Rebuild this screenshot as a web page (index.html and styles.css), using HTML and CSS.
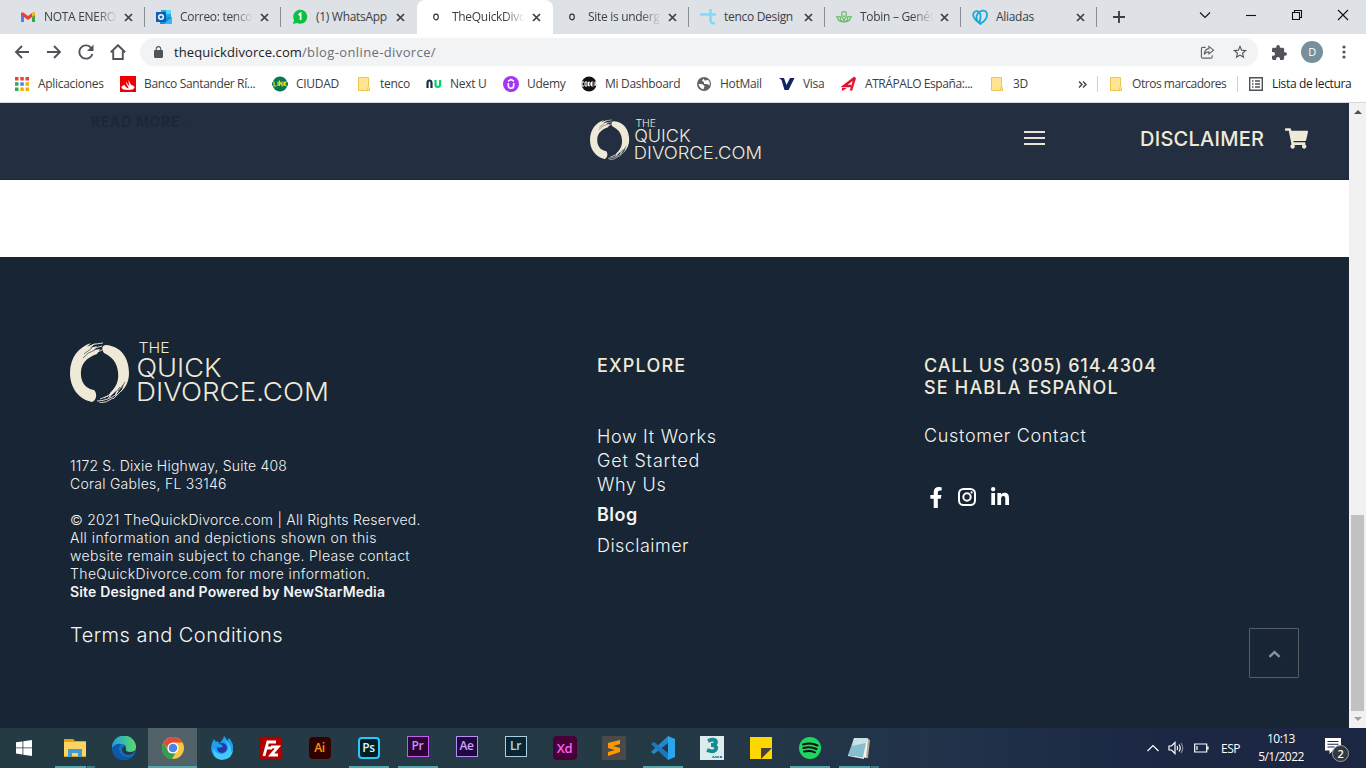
FILE: index.html
```
<!DOCTYPE html>
<html lang="es">
<head>
<meta charset="utf-8">
<title>TheQuickDivorce</title>
<link rel="stylesheet" href="styles.css">
</head>
<body>
<svg class="defs" aria-hidden="true">
  <symbol id="close" viewBox="0 0 9 9"><path d="M1 1l7 7M8 1L1 8" stroke="#3c4043" stroke-width="1.7" fill="none"/></symbol>
  <symbol id="folder" viewBox="0 0 16 16"><path d="M2.500 1.500h10v9l1 1v3h-11z" fill="#ffe591" stroke="#e9c84d"/><path d="M11.500 14.500v-3l1-1 1 1v3z" fill="#ffe591" stroke="#e9c84d" stroke-width=".8"/></symbol>
  <g id="ring">
    <g fill="#efead8">
      <path d="M22 60C8 57 0 45 0 31 0 15 9 5 21 1l-4 4 9-4-6 5 7-2-3 4 6-1-3 5C16 16 10 22 11 34c1 8 6 13 13 14 4 4 2 11-2 12z"/>
      <path d="M36 3c15 1 23 13 23 28 0 8-3 14-8 19l3-8-9 12 1-5-8 8 2-6c7-7 9-13 8-21-1-10-6-15-14-19-3-4-2-8 2-8z"/>
    </g>
    <path d="M16 6Q24 1 33 1M20 9q6-4 12-5M25 11l7-3M10 13Q16 5 23 3M27 59q10 0 20-7M29 61q8 0 14-5M34 56q8-4 12-9M43 57l9-9M46 46l7-8M30 57l8-3" fill="none" stroke="#efead8" stroke-width=".9"/>
    <path d="M14 12l8-6M13 16q5-6 12-8M50 45q-4 6-9 9M55 40q-3 5-7 9" fill="none" stroke="#172535" stroke-width=".6"/>
  </g>
</svg>

<div class="tabs">
  <div class="tab first"><svg class="ico" viewBox="0 0 16 16"><path d="M1 13V4l3 2v7z" fill="#4285f4"/><path d="M12 6l3-2v9h-3z" fill="#34a853"/><path d="M1 5q0-3 3-1l4 3 4-3q3-2 3 1v1L8 11 1 6z" fill="#ea4335"/><path d="M12 4q3-2 3 1v1l-3 2z" fill="#fbbc04"/></svg><span>NOTA ENERO</span><svg class="x"><use href="#close"/></svg></div>
  <div class="tab"><svg class="ico" viewBox="0 0 16 16"><path d="M5 1h10v7H5z" fill="#28a8ea"/><path d="M10 1h5v4h-5z" fill="#50d9ff"/><path d="M4 7l12 1v7H4z" fill="#1490df"/><path d="M16 8l-8 7h8z" fill="#35b8f1"/><path d="M0 3h10v10H0z" fill="#0f5fb4"/><circle cx="5" cy="8" r="2.300" fill="none" stroke="#fff" stroke-width="1.500"/></svg><span>Correo: tenco</span><svg class="x"><use href="#close"/></svg></div>
  <div class="tab no-sep"><svg class="ico" viewBox="0 0 16 16"><path d="M1 15l1-4a7 7 0 1 1 3 3z" fill="#0bc143"/><path d="M6.500 6L8.600 4.500V11" stroke="#fff" stroke-width="1.700" fill="none"/></svg><span class="full">(1) WhatsApp</span><svg class="x"><use href="#close"/></svg></div>
  <div class="tab active"><svg class="ico" viewBox="0 0 16 16"><ellipse cx="8" cy="8" rx="2.300" ry="2.800" fill="none" stroke="#333" stroke-width="1.200"/></svg><span>TheQuickDivo</span><svg class="x"><use href="#close"/></svg></div>
  <div class="tab"><svg class="ico" viewBox="0 0 16 16"><ellipse cx="8" cy="8" rx="2.300" ry="2.800" fill="none" stroke="#333" stroke-width="1.200"/></svg><span>Site is underg</span><svg class="x"><use href="#close"/></svg></div>
  <div class="tab"><svg class="ico" viewBox="0 0 16 16"><path d="M0 5.500h16M10.500 0v12q0 2.500 4.500 2.300" stroke="#7fdcf8" stroke-width="2.600" fill="none"/></svg><span class="full">tenco Design</span><svg class="x"><use href="#close"/></svg></div>
  <div class="tab"><svg class="ico" viewBox="0 0 16 16"><g fill="none" stroke="#6dbb6d" stroke-width="1.100"><circle cx="8" cy="5" r="2.400"/><path d="M8 13Q4 12 4 7.500q4 1 4 5.500zM8 13q4-1 4-5.500-4 1-4 5.500zM8 13Q2 13 .7 7.500l3 .5M8 13q6 0 7.300-5.500l-3 .5"/></g></svg><span>Tobin – Genét</span><svg class="x"><use href="#close"/></svg></div>
  <div class="tab"><svg class="ico" viewBox="0 0 16 16"><g fill="none" stroke="#18a9dc" stroke-width="1.800"><path d="M8 14.500C2 11 0 6 2 3.500S8 2 8.500 6 7 12 8 14.500z"/><path d="M8 14.500c6-2 8-8 6.500-11S8 1 5.500 5s0 8 2.500 9.500z"/></g></svg><span class="full">Aliadas</span><svg class="x"><use href="#close"/></svg></div>
  <svg class="plus" viewBox="0 0 12 12"><path d="M6 0v12M0 6h12" stroke="#3c4043" stroke-width="1.900"/></svg>
  <div class="win">
    <svg viewBox="0 0 12 12"><path d="M1 3.500l5 5 5-5" /></svg>
    <svg viewBox="0 0 12 12"><path d="M1 6.500h10"/></svg>
    <svg viewBox="0 0 12 12"><path d="M1.500 3.500h7v7h-7zM3.500 3.500v-2h7v7h-2"/></svg>
    <svg viewBox="0 0 12 12"><path d="M1 1l10 10M11 1L1 11"/></svg>
  </div>
</div>

<div class="toolbar">
  <div class="nav">
    <svg viewBox="0 0 16 16"><path d="M15 8H2M8 2L2 8l6 6"/></svg>
    <svg viewBox="0 0 16 16"><path d="M1 8h13M8 2l6 6-6 6"/></svg>
    <svg class="fill" viewBox="3.500 3.500 17 17"><path d="M17.650 6.350A7.960 7.960 0 0 0 12 4c-4.420 0-7.990 3.580-7.990 8s3.570 8 7.990 8c3.730 0 6.840-2.550 7.730-6h-2.080A5.990 5.990 0 0 1 12 18c-3.310 0-6-2.690-6-6s2.690-6 6-6c1.660 0 3.140.69 4.220 1.780L13 11h7V4l-2.350 2.350z"/></svg>
    <svg viewBox="0 0 16 16"><path d="M.8 8.300L8 1.200l7.200 7.100M3.200 7v8h9.600V7"/></svg>
  </div>
  <div class="omnibox">
    <svg class="lock" viewBox="4 1 16 21"><path d="M18 8h-1V6c0-2.760-2.240-5-5-5S7 3.240 7 6v2H6c-1.100 0-2 .9-2 2v10c0 1.100.9 2 2 2h12c1.100 0 2-.9 2-2V10c0-1.100-.9-2-2-2zm-2.900 0H8.900V6c0-1.710 1.390-3.100 3.100-3.100s3.100 1.390 3.100 3.100v2z"/></svg>
    <div class="url"><span class="host">thequickdivorce.com</span><span class="path">/blog-online-divorce/</span></div>
    <svg class="share" viewBox="0 0 16 16"><path d="M6 2.500H3Q1.500 2.500 1.500 4v8.500Q1.500 14 3 14h8.500q1.500 0 1.500-1.500V11M9.500 1.500l5 4-5 4V7.300Q6 7.300 4.500 10 5 4.500 9.500 3.900z"/></svg>
    <svg class="star" viewBox="2 2 20 20"><path d="M22 9.240l-7.190-.62L12 2 9.190 8.630 2 9.240l5.460 4.730L5.820 21 12 17.270 18.180 21l-1.630-7.030L22 9.240zM12 15.400l-3.760 2.270 1-4.280-3.320-2.880 4.380-.38L12 6.100l1.710 4.040 4.380.38-3.320 2.880 1 4.280L12 15.400z"/></svg>
  </div>
  <svg class="ext" viewBox="2 1 21 21"><path d="M20.500 11H19V7c0-1.100-.9-2-2-2h-4V3.500a2.500 2.500 0 0 0-5 0V5H4c-1.100 0-1.990.9-1.990 2v3.800H3.500c1.490 0 2.700 1.210 2.700 2.700s-1.210 2.700-2.700 2.700H2V20c0 1.100.9 2 2 2h3.800v-1.500c0-1.490 1.210-2.700 2.700-2.700s2.700 1.210 2.700 2.700V22H17c1.100 0 2-.9 2-2v-4h1.500a2.500 2.500 0 0 0 0-5z"/></svg>
  <div class="avatar">D</div>
  <svg class="dots" viewBox="0 0 4 14"><circle cx="2" cy="2" r="1.600"/><circle cx="2" cy="7" r="1.600"/><circle cx="2" cy="12" r="1.600"/></svg>
</div>

<div class="bookmarks">
  <div class="bm b1"><svg viewBox="0 0 16 16"><path d="M1 1h3.500v3.500H1zM6.300 1h3.500v3.500H6.300zM11.500 1H15v3.500h-3.500z" fill="#ea4335"/><path d="M1 6.300h3.500v3.500H1zM1 11.500h3.500V15H1z" fill="#34a853"/><path d="M6.300 6.300h3.500v3.500H6.300z" fill="#4285f4"/><path d="M11.500 6.300H15v3.500h-3.500zM11.500 11.500H15V15h-3.500zM6.300 11.500h3.500V15H6.300z" fill="#f9ab00"/></svg>Aplicaciones</div>
  <div class="bm b2"><svg viewBox="0 0 16 16"><path d="M0 0h16v16H0z" fill="#ec0000"/><path d="M8 2q0 2 1.500 4T11 9q3.500.5 3.500 2.500Q14 14 8 14t-6.500-2.500Q1.500 9.500 5 9q0 2 3.500 3.500Q8.500 11 7 9T6 5.500Q6.500 7 8 8.500T9.500 12" fill="#fff"/></svg>Banco Santander Rí...</div>
  <div class="bm b3"><svg viewBox="0 0 16 16"><circle cx="8" cy="8" r="7.500" fill="#05765b"/><rect x="0" y="5.500" width="16" height="5" rx="2" fill="#05765b"/><path d="M2 5.500v4.500h2.500M6 5.500V10M7.500 10V5.500l2.500 4V5.500M12 5.500V10M14.500 5.500L12 8l2.500 2" stroke="#f5dd15" stroke-width="1.200" fill="none"/></svg>CIUDAD</div>
  <div class="bm b4"><svg><use href="#folder"/></svg>tenco</div>
  <div class="bm b5"><svg viewBox="0 0 16 16"><path d="M1.500 12V7q0-2.500 2-2.500t2 2.500v5" stroke="#1c2b45" stroke-width="2.200" fill="none"/><path d="M9.500 4v4.500q0 2.500 2.300 2.500t2.300-2.500V4" stroke="#00d26a" stroke-width="2.200" fill="none"/></svg>Next U</div>
  <div class="bm b6"><svg viewBox="0 0 16 16"><circle cx="8" cy="8" r="8" fill="#a435f0"/><path d="M5.300 7v2.500q0 2.700 2.700 2.700t2.700-2.700V7M5 5.200l3-1.700 3 1.700" stroke="#fff" stroke-width="1.600" fill="none"/></svg>Udemy</div>
  <div class="bm b7"><svg viewBox="0 0 16 16"><circle cx="8" cy="8" r="7.500" fill="#111"/><path d="M3 6H1v4h2M4 6h2v4H4zM7.500 6v4h1l.7-1V7l-.7-1zM12.500 6h-2v4h2M10.500 8h2M14 10V6h1.500v2H14l1.500 2" stroke="#fff" stroke-width="1" fill="none"/></svg>Mi Dashboard</div>
  <div class="bm b8"><svg viewBox="0 0 16 16"><circle cx="8" cy="8" r="7" fill="#5f6368"/><path d="M2.500 8l4 .3 2 1.700-1 3.300q-4-.8-5-5.300zM7.500 2.500L6 5l2 1v2h3l2.700 1.500q.5-4-2-5.700L9 4.700z" fill="#fff"/></svg>HotMail</div>
  <div class="bm b9"><svg viewBox="0 0 16 16"><path d="M0 2h5l2.500 7L11 2h4.500L9.500 14H5.500L2.500 4z" fill="#14265f"/></svg>Visa</div>
  <div class="bm b10"><svg viewBox="0 0 16 16"><path d="M14 1.500L10 14.500M14 1.500L3 10h7" stroke="#e0132d" stroke-width="2.400" fill="none"/><path d="M1 12h5l-5 3z" fill="#e0132d"/></svg>ATRÁPALO España:...</div>
  <div class="bm b11"><svg><use href="#folder"/></svg>3D</div>
  <svg class="more" viewBox="0 0 9 7"><path d="M1 .5l3 3-3 3M5 .5l3 3-3 3" fill="none" stroke="#3c4043" stroke-width="1.400"/></svg>
  <div class="bm b12"><svg><use href="#folder"/></svg>Otros marcadores</div>
  <div class="bm b13"><svg viewBox="0 0 16 16"><path d="M1.700 1.700h12.600v12.600H1.700zM4 5h1.500M7 5h5M4 8h1.500M7 8h5M4 11h1.500M7 11h5" fill="none" stroke="#4d5156" stroke-width="1.400"/></svg>Lista de lectura</div>
</div>

<div class="view">
  <div class="site">
    <div class="header">
      <div class="ghost g1">READ MORE <small>○</small></div>
      <div class="ghost g2"></div>
      <svg class="hlogo" viewBox="0 0 259 61"><use href="#ring"/><g class="logo-text"><text x="68.500" y="11" font-size="15" textLength="31" lengthAdjust="spacingAndGlyphs">THE</text><text x="66.500" y="34.700" font-size="26" textLength="85" lengthAdjust="spacingAndGlyphs">QUICK</text><text x="66" y="59.200" font-size="26" textLength="193" lengthAdjust="spacingAndGlyphs">DIVORCE.COM</text></g></svg>
      <div class="burger"><i></i><i></i><i></i></div>
      <div class="disc">DISCLAIMER</div>
      <svg class="cart" viewBox="0 0 576 512"><path d="M528.120 301.319l47.273-208C578.806 78.301 567.391 64 551.990 64H159.208l-9.166-44.810C147.758 8.021 137.930 0 126.529 0H24C10.745 0 0 10.745 0 24v16c0 13.255 10.745 24 24 24h69.883l70.248 343.435C147.325 417.100 136 435.222 136 456c0 30.928 25.072 56 56 56s56-25.072 56-56c0-15.674-6.447-29.835-16.824-40h209.647C430.447 426.165 424 440.326 424 456c0 30.928 25.072 56 56 56s56-25.072 56-56c0-22.172-12.888-41.332-31.579-50.405l5.517-24.276c3.413-15.018-8.002-29.319-23.403-29.319H218.117l-6.545-32h293.145c11.206 0 20.920-7.754 23.403-18.681z"/></svg>
    </div>
    <div class="footer">
      <div class="about">
        <svg class="flogo" viewBox="0 0 259 61"><use href="#ring"/><g class="logo-text"><text x="68.500" y="11" font-size="15" textLength="31" lengthAdjust="spacingAndGlyphs">THE</text><text x="66.500" y="34.700" font-size="26" textLength="85" lengthAdjust="spacingAndGlyphs">QUICK</text><text x="66" y="59.200" font-size="26" textLength="193" lengthAdjust="spacingAndGlyphs">DIVORCE.COM</text></g></svg>
        <p class="addr"><span class="s1">1172 S. Dixie Highway, Suite 408</span><br><span class="s2">Coral Gables, FL 33146</span></p>
        <p class="legal"><span class="s2">© 2021 TheQuickDivorce.com | All Rights Reserved.</span><br><span class="s4">All information and depictions shown on this</span><br><span class="s3">website remain subject to change. Please contact</span><br><span class="s3">TheQuickDivorce.com for more information.</span><br><b>Site Designed and Powered by NewStarMedia</b></p>
        <a class="terms">Terms and Conditions</a>
      </div>
      <div class="explore">
        <h4>EXPLORE</h4>
        <a>How It Works</a><a class="gs">Get Started</a><a>Why Us</a><a class="blog">Blog</a><a class="dl">Disclaimer</a>
      </div>
      <div class="contact">
        <h4><span class="call">CALL US (305) 614.4304</span><br>SE HABLA ESPAÑOL</h4>
        <a>Customer Contact</a>
        <div class="social">
          <svg class="fb" viewBox="22 0 276 512"><path d="M279.140 288l14.220-92.660h-88.910v-60.130c0-25.350 12.420-50.060 52.240-50.060h40.420V6.260S260.430 0 225.360 0c-73.220 0-121.080 44.380-121.080 124.720v70.620H22.890V288h81.390v224h100.170V288z"/></svg>
          <svg class="ig" viewBox="0 0 18 18"><rect x="1" y="1" width="16" height="16" rx="4.500"/><circle cx="9" cy="9" r="3.700"/><circle class="dot" cx="13.600" cy="4.400" r="1.100"/></svg>
          <svg class="li" viewBox="0 0 448 448"><path d="M100.280 448H7.400V148.900h92.880zM53.790 108.100C24.090 108.100 0 83.500 0 53.800a53.790 53.790 0 0 1 107.580 0c0 29.700-24.100 54.300-53.790 54.300zM447.900 448h-92.680V302.400c0-34.700-.7-79.200-48.290-79.200-48.290 0-55.690 37.700-55.690 76.700V448h-92.780V148.900h89.080v40.800h1.300c12.400-23.500 42.690-48.300 87.880-48.300 94 0 111.280 61.900 111.280 142.300V448z"/></svg>
        </div>
      </div>
      <div class="totop"><svg viewBox="0 0 14 8"><path d="M1.500 7L7 2l5.500 5"/></svg></div>
    </div>
  </div>
  <div class="scroll"><i class="up"></i><div class="thumb"></div><i class="down"></i></div>
</div>

<div class="taskbar">
  <div class="app start"><svg viewBox="0 0 16 16"><path d="M0 2.300L6.500 1.400v6.100H0zM7.300 1.300L16 0v7.500H7.300zM0 8.300h6.500v6.200L0 13.600zM7.300 8.300H16V16l-8.700-1.300z" fill="#fff"/></svg></div>
  <div class="app run multi"><svg viewBox="0 0 24 24"><path d="M1 3h9l2 2h11v16H1z" fill="#e2a50b"/><path d="M1 6h22v14H1z" fill="#fcd462"/><path d="M5 13h14v8h-4v-4H9v4H5z" fill="#3e9ad8"/></svg></div>
  <div class="app"><svg viewBox="0 0 24 24"><defs><linearGradient id="eg"><stop offset="0" stop-color="#1f9de6"/><stop offset="1" stop-color="#5edb63"/></linearGradient></defs><circle cx="12" cy="12" r="12" fill="#1270c4"/><path d="M0 12A12 12 0 0 1 24 11q0 5-6 5-5 0-4-3 1-5-5-5Q3 8 0 12z" fill="url(#eg)"/><path d="M9 8q-4 5 0 10 5 5 12 2-4 5-11 4Q0 21 0 12q4-5 9-4z" fill="#0e58a5"/><path d="M14 13q-1 3 4 3 3 0 5-1.500Q21 19 16 19q-6-1-6-5 0-3 3-4z" fill="#223a45"/></svg></div>
  <div class="app run current"><svg viewBox="0 0 24 24"><circle cx="12" cy="12" r="11" fill="#f8c73c"/><path d="M2.500 6.500A11 11 0 0 1 21.500 6.500H12L7.300 14.500z" fill="#df4a3c"/><path d="M2.500 6.500A11 11 0 0 0 11 23l5-8.500L12 17H8z" fill="#2c9f56"/><circle cx="12" cy="12" r="5.600" fill="#fff"/><circle cx="12" cy="12" r="4.300" fill="#4a86e8"/></svg></div>
  <div class="app"><svg viewBox="0 0 24 24"><path d="M2 7l2-4 2 3 2-1 1 3 4-5 1-3q3 2 3 5l2-3q5 6 4 11-1 9-11 10Q1 22 1 12z" fill="#1b9ff1"/><path d="M13 3q6 5 5 10-2 5-7 5-7-1-7-7-3 12 8 13 11-1 11-11-1 3-2 3 1-9-8-13z" fill="#43c8ff"/><circle cx="12" cy="12" r="5" fill="#2439a5"/><path d="M6 8q4-1 7 2-2 3-6 1z" fill="#1b9ff1"/></svg></div>
  <div class="app"><svg viewBox="0 0 24 24"><path d="M1 1h22v22H1z" fill="#b30000" stroke="#7c1010" stroke-dasharray="2 1"/><path d="M8 6h9M5 20L9 5M7 12h6M12 11h7l-7 8h7" fill="none" stroke="#fff" stroke-width="2.800"/></svg></div>
  <div class="app"><span class="ad ai">Ai</span></div>
  <div class="app run small"><span class="ad ps">Ps</span></div>
  <div class="app run small"><span class="ad pr">Pr</span></div>
  <div class="app"><span class="ad ae">Ae</span></div>
  <div class="app"><span class="ad lr">Lr</span></div>
  <div class="app"><span class="ad xd">Xd</span></div>
  <div class="app"><svg viewBox="0 0 24 24"><rect width="24" height="24" rx="1.500" fill="#4a4a4a"/><path d="M6 7l12-3v4l-7 2 7 2v4L6 20v-4l7-2-7-2z" fill="#ff9800"/></svg></div>
  <div class="app run small"><svg viewBox="0 0 24 24"><path d="M17 0l7 3v18l-7 3z" fill="#2ba5ef"/><path d="M17 0v7L3 18l-3-2z" fill="#1f8ad2"/><path d="M17 24v-7L3 6 0 8z" fill="#1d79bf"/></svg></div>
  <div class="app"><svg viewBox="0 0 24 24"><path d="M0 0h24v24H0z" fill="#dcebed"/><path d="M8 5q7-3 8 1 0 3-5 3 6 0 5 4-2 4-9 1" fill="none" stroke="#158c8f" stroke-width="3.800"/><path d="M13 22v-2l1.500 2L16 20v2m1 0l1-2 1 2m1-2l2 2m0-2l-2 2" stroke="#158c8f" fill="none"/></svg></div>
  <div class="app"><svg viewBox="0 0 24 24"><path d="M1 1h22v22H1z" fill="#fdd800"/><path d="M12 12h11L12 23z" fill="#44423b"/></svg></div>
  <div class="app run small"><svg viewBox="0 0 24 24"><circle cx="12" cy="12" r="11" fill="#1ed760"/><path d="M5 8.500q8-2.500 14.500 1M5.500 12q7-2 13 1M6 15.500q6-1.500 11 .8" fill="none" stroke="#111" stroke-width="2" stroke-linecap="round"/></svg></div>
  <div class="app run multi"><svg viewBox="0 0 24 24"><path d="M20 2l3 2-2 18h-3z" fill="#b9a88a"/><path d="M7 2h13l-3 19L1 19z" fill="#86bfcf"/><path d="M7 2h13l-1 5L5 10z" fill="#c9e2e8"/><path d="M20 2l1 1-2 19-3-1z" fill="#eef4f5"/><path d="M1 19l16 2v2L1 20z" fill="#d8e6e9"/></svg></div>
  <div class="tray">
    <svg class="chev" viewBox="0 0 12 8"><path d="M.5 7L6 1.500 11.500 7"/></svg>
    <svg class="vol" viewBox="0 0 17 14"><path d="M1 5h2.500L7 1.500v11L3.500 9H1z"/><path d="M9 5q1.300 2 0 4M11 3.500q2.500 3.500 0 7"/><path d="M13 2q3.500 5 0 10" opacity=".45"/></svg>
    <svg class="bat" viewBox="0 0 15 10"><path d="M.7 1h12v8H.7zM14 3.500v3M3 3v4"/></svg>
    <span class="esp">ESP</span>
    <div class="clock"><span>10:13</span><span>5/1/2022</span></div>
    <div class="note"><svg viewBox="0 0 16 16"><path d="M0 0h16v12.500H8L4.500 16v-3.500H0z" fill="#fff"/><path d="M2.500 3.500h11M2.500 6.300h11M2.500 9h7" stroke="#1c2b44" stroke-width="1.100"/></svg><b>2</b></div>
  </div>
</div>
</body>
</html>
```
FILE: styles.css
```
* { box-sizing: border-box; }
body { margin: 0; width: 1366px; height: 768px; overflow: hidden; display: flex; flex-direction: column; background: #fff; font-family: "Open Sans", sans-serif; font-size: 12px; letter-spacing: -0.3px; color: #3c4043; }
svg { display: block; flex: none; }
.defs { position: absolute; width: 0; height: 0; }

/* Tab strip */
.tabs { height: 34px; background: #dee1e6; display: flex; align-items: center; padding-left: 8px; }
.tab { position: relative; width: 136px; height: 34px; display: flex; align-items: center; padding: 0 0 0 11px; flex: none; }
.tab.first { width: 137px; padding-left: 12px; }
.tab::after { content: ""; position: absolute; right: 0; top: 7px; width: 1px; height: 20px; background: #8a8d91; }
.tab.no-sep::after, .tab.active::after { display: none; }
.tab.active { background: #fff; border-radius: 8px 8px 0 0; }
.ico { width: 16px; height: 16px; margin-right: 8px; }
.tab span { width: 73px; white-space: nowrap; line-height: 18px; -webkit-mask-image: linear-gradient(90deg, #000 72%, transparent); mask-image: linear-gradient(90deg, #000 72%, transparent); }
.tab span.full { -webkit-mask-image: none; mask-image: none; }
.x { width: 9px; height: 9px; margin-left: 7px; }
.plus { width: 12px; height: 12px; margin-left: 16px; }
.win { display: flex; gap: 34px; margin: -5px 17px 0 auto; }
.win svg { width: 12px; height: 12px; fill: none; stroke: #111; stroke-width: 1.1; }

/* Toolbar */
.toolbar { height: 36px; display: flex; align-items: center; background: #fff; }
.nav { display: flex; gap: 16px; padding-left: 14px; width: 140px; }
.nav svg { width: 16px; height: 16px; fill: none; stroke: #50545a; stroke-width: 1.9; }
.nav svg.fill { fill: #50545a; stroke: none; }
.omnibox { width: 1118px; height: 28px; border-radius: 14px; background: #f1f3f4; display: flex; align-items: center; padding: 0 11px 0 14px; font-size: 13px; }
.lock { width: 9px; height: 12px; margin-right: 11px; fill: #50545a; }
.url { line-height: 20px; white-space: nowrap; }
.host { color: #202124; letter-spacing: 0.1px; }
.path { color: #6b6f74; letter-spacing: 0.38px; }
.share { width: 15px; height: 15px; margin-left: auto; margin-right: 18px; fill: none; stroke: #5f6368; stroke-width: 1.2; }
.star { width: 14px; height: 14px; fill: #50545a; }
.ext { width: 15px; height: 15px; fill: #50545a; margin-left: 14px; }
.avatar { width: 22px; height: 22px; border-radius: 50%; background: #78909c; color: #fff; font-size: 11px; line-height: 22px; text-align: center; margin-left: 14px; }
.dots { width: 4px; height: 14px; fill: #50545a; margin-left: 19px; }

/* Bookmarks */
.bookmarks { height: 33px; display: flex; align-items: center; padding: 0 0 4px 14px; border-bottom: 1px solid #d5d7db; white-space: nowrap; }
.bm { display: flex; align-items: center; gap: 8px; flex: none; line-height: 18px; }
.bm svg { width: 16px; height: 16px; }
.b1 { width: 106px; }
.b2 { width: 152px; letter-spacing: -0.36px; }
.b3 { width: 84px; }
.b4 { width: 70px; }
.b5 { width: 77px; }
.b6 { width: 78px; }
.b7 { width: 115px; }
.b8 { width: 83px; }
.b9 { width: 62px; }
.b10 { width: 148px; letter-spacing: -0.43px; }
.b11 { width: 89px; }
.more { width: 9px; height: 7px; }
.b12, .b13 { height: 16px; border-left: 1px solid #cfd1d4; }
.b12 { margin-left: 10px; width: 140px; padding-left: 10px; letter-spacing: -0.45px; }
.b13 { padding-left: 10px; color: #202124; letter-spacing: -0.35px; }

/* Page */
.view { height: 625px; display: flex; }
.site { width: 1349px; display: flex; flex-direction: column; font-family: Inter, sans-serif; color: #f4f4f2; letter-spacing: 0; }
.header { position: relative; height: 77px; background: #232f40; border-bottom: 1px solid #1a2736; display: flex; padding-left: 590px; }
.ghost { position: absolute; top: 0; height: 59px; border: solid #222d3d; border-width: 0 2px 2px; }
.g1 { left: 74px; width: 355px; padding: 10px 0 0 15px; font: 700 14px/18px Inter, sans-serif; letter-spacing: .66px; color: #1b2839; }
.g1 small { font-size: 8px; color: #202c3d; }
.g2 { left: 498px; width: 354px; }
.hlogo { width: 172px; height: 41px; margin-top: 16px; position: relative; }
.logo-text { font-family: Inter, sans-serif; font-weight: 350; fill: #efead8; }
.burger { width: 21px; margin: 28px 0 0 262px; display: flex; flex-direction: column; }
.burger i { height: 2px; margin-bottom: 4px; background: #e6e4d8; }
.disc { width: 145px; margin: 24px 0 0 95px; font-size: 20px; line-height: 24px; font-weight: 500; letter-spacing: .25px; color: #efead8; }
.cart { width: 23px; height: 21px; margin-top: 25px; fill: #efead8; }
.footer { position: relative; margin-top: auto; height: 471px; background: #172535; display: grid; grid-template-columns: 527px 327px 1fr; padding-left: 70px; }
.flogo { width: 259px; height: 61px; margin-top: 85px; }
.about p { margin: 0; font-size: 14px; line-height: 18px; font-weight: 300; white-space: nowrap; }
.about .addr { margin-top: 54px; }
.about .legal { margin-top: 18px; }
.about b { font-weight: 600; letter-spacing: .15px; }
.s1 { letter-spacing: .19px; }
.s2 { letter-spacing: .25px; }
.s3 { letter-spacing: .37px; }
.s4 { letter-spacing: .45px; }
.terms { display: block; margin-top: 22px; font-size: 20px; line-height: 24px; font-weight: 300; letter-spacing: .48px; }
h4 { margin: 98px 0 0; font-size: 18px; line-height: 22px; font-weight: 500; letter-spacing: 1.18px; color: #efead8; }
.explore, .contact { font-size: 18px; font-weight: 300; letter-spacing: .68px; }
.explore a { display: block; line-height: 24px; }
.explore h4 + a { margin-top: 48px; }
.explore .gs { letter-spacing: .8px; }
.explore .blog { font-weight: 600; letter-spacing: .5px; margin: 6px 0 7px; }
.explore .dl { letter-spacing: .46px; }
.call { letter-spacing: .83px; }
.contact a { display: block; margin-top: 25px; line-height: 24px; }
.social { display: flex; align-items: center; margin: 38px 0 0 6px; height: 22px; fill: #fff; }
.fb { width: 12px; height: 21px; }
.ig { width: 18px; height: 18px; margin-left: 16px; fill: none; stroke: #fff; stroke-width: 2; }
.ig .dot { fill: #fff; stroke: none; }
.li { width: 18px; height: 18px; margin: -2px 0 0 15px; }
.totop { position: absolute; left: 1249px; top: 371px; width: 50px; height: 50px; border: 1px solid #565d64; border-radius: 1px; display: flex; align-items: center; justify-content: center; }
.totop svg { width: 13px; height: 8px; margin-top: 2px; fill: none; stroke: #8c9299; stroke-width: 2.6; }

.scroll { width: 17px; background: #f1f1f1; display: flex; flex-direction: column; align-items: center; padding: 7px 0; }
.scroll i { border: solid transparent; border-width: 0 4px; }
.scroll .up { border-bottom: 4px solid #505050; }
.scroll .down { border-top: 4px solid #a0a0a0; margin-top: 6px; }
.thumb { width: 13px; height: 196px; background: #c1c1c1; margin-top: auto; }

/* Taskbar */
.taskbar { height: 40px; display: flex; background: linear-gradient(90deg, #243b44 0, #243a44 45%, #22334a 68%, #1b2743 85%, #1a2642); }
.app { position: relative; width: 49px; flex: none; display: flex; align-items: center; justify-content: center; }
.app svg { width: 24px; height: 24px; }
.start { width: 50px; padding-right: 2px; }
.start svg { width: 16px; height: 16px; }
.current { background: #516168; }
.run::before { content: ""; position: absolute; bottom: 0; left: 0; width: 49px; height: 2px; background: #4fa6ad; }
.small::before { left: 5px; width: 40px; }
.multi::before { left: 5px; width: 40px; background: linear-gradient(90deg, #4fa6ad 31px, #2c4f5a 31px, #2c4f5a 32px, #3b7a84 32px); }
.ad { width: 22px; height: 22px; font-size: 12px; font-weight: 600; line-height: 17px; text-align: center; border: 2px solid; letter-spacing: -.4px; }
.ai { background: #300; color: #ff9a00; border-color: #300; border-radius: 4px; }
.ps { background: #001e26; color: #d6f3ff; border-color: #26c9ff; border-radius: 4px; }
.pr, .ae, .lr { width: 22px; height: 21px; line-height: 17px; margin-top: -3px; border-width: 1.500px; }
.pr { background: #2a0634; color: #d988ff; border-color: #c65cf0; }
.ae { background: #1f0740; color: #cfa0ff; border-color: #b98cf5; }
.lr { background: #0b2532; color: #b4dcec; border-color: #a6cfe0; }
.xd { width: 24px; height: 24px; line-height: 20px; font-size: 13px; background: #470137; color: #ff61f6; border-color: #470137; border-radius: 4px; }
.tray { margin-left: auto; display: flex; align-items: center; color: #fff; padding-right: 17px; }
.tray svg { fill: none; stroke: #fff; stroke-width: 1.2; }
.chev { width: 12px; height: 8px; }
.vol { width: 17px; height: 14px; margin-left: 9px; }
.bat { width: 15px; height: 10px; margin-left: 9px; }
.esp { width: 19px; margin-left: 12px; letter-spacing: -.5px; }
.clock { display: flex; flex-direction: column; align-items: center; width: 48px; margin-left: 17px; line-height: 18px; letter-spacing: -.55px; }
.note { position: relative; width: 24px; height: 24px; margin: 4px 0 0 20px; }
.note svg { width: 16px; height: 16px; stroke: none; }
.note b { position: absolute; left: 7px; top: 7px; width: 17px; height: 17px; border: 1px solid #9a9fa6; border-radius: 50%; background: #33383f; font-size: 11px; line-height: 15px; text-align: center; font-weight: 600; }
```
